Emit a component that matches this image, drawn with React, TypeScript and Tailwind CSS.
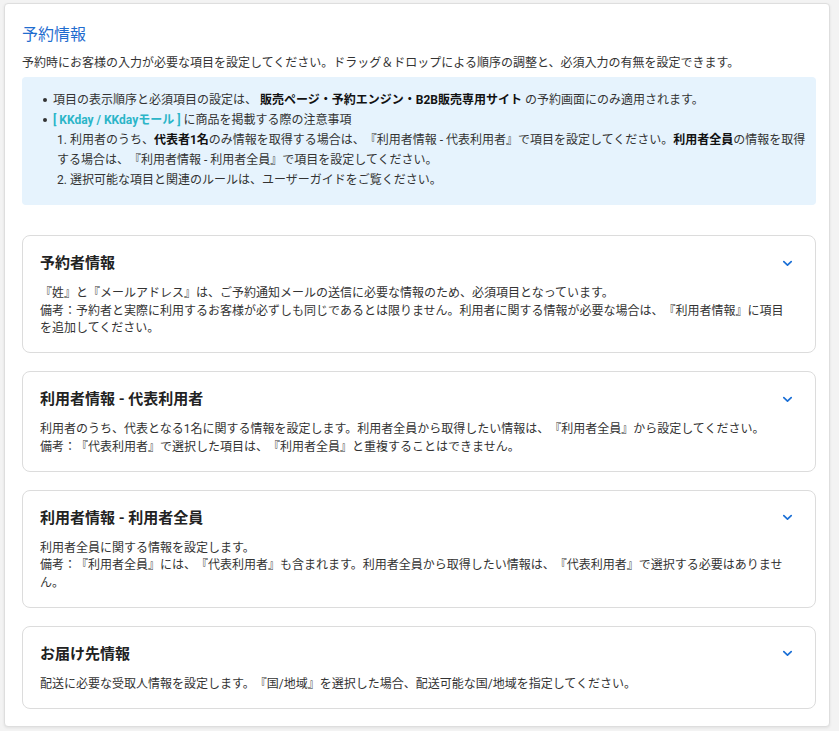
import React from "react";

const FONT = 'Roboto, "Noto Sans CJK JP", "Noto Sans", sans-serif';

function Chevron() {
  return (
    <svg width="11" height="7" viewBox="0 0 11 7" fill="none" className="shrink-0">
      <path d="M1.8 1.6 L5.5 5.1 L9.2 1.6" stroke="#1a6fd6" strokeWidth="1.7" strokeLinecap="round" strokeLinejoin="round" />
    </svg>
  );
}

function Section({ title, lines }: { title: string; lines: string[] }) {
  return (
    <div className="border border-[#dcdcdc] rounded-[8px] bg-white pl-[17px] pr-[22px] pt-[16px] pb-[14.5px]">
      <div className="flex items-center justify-between h-[22px]">
        <div className="text-[15px] font-bold text-[#222] leading-[22px]">{title}</div>
        <Chevron />
      </div>
      <div className="mt-[11px] text-[12px] leading-[17.5px] text-[#333]">
        {lines.map((l, i) => (
          <div key={i}>{l}</div>
        ))}
      </div>
    </div>
  );
}

export default function App() {
  return (
    <div
      className="min-h-screen bg-[#f3f3f3] pt-[3px] pl-[4px] [text-spacing-trim:space-all]"
      style={{ fontFamily: FONT }}
    >
      <div className="w-[826px] bg-white border border-[#dedede] rounded-[4px] shadow-[0_1px_3px_rgba(0,0,0,0.08)] pl-[17px] pr-[13px] pt-[19px] pb-[17px]">
        <div className="text-[16px] leading-[24px] text-[#1f6dcf]">予約情報</div>
        <div className="mt-[7px] text-[12px] leading-[18px] text-[#333]">
          予約時にお客様の入力が必要な項目を設定してください。ドラッグ＆ドロップによる順序の調整と、必須入力の有無を設定できます。
        </div>
        <div className="mt-[5px] bg-[#e6f3fd] rounded-[4px] pl-[18px] pr-[4px] pt-[13px] pb-[15px] text-[12px] leading-[20px] text-[#333]">
          <div className="flex">
            <div className="w-[13px] shrink-0 flex items-start pt-[8px]">
              <div className="w-[4px] h-[4px] rounded-full bg-[#333] ml-[3px]" />
            </div>
            <div>
              項目の表示順序と必須項目の設定は、 <b className="text-[#111]">販売ページ・予約エンジン・B2B販売専用サイト</b> の予約画面にのみ適用されます。
            </div>
          </div>
          <div className="flex">
            <div className="w-[13px] shrink-0 flex items-start pt-[8px]">
              <div className="w-[4px] h-[4px] rounded-full bg-[#333] ml-[3px]" />
            </div>
            <div className="flex-1">
              <div>
                <b className="text-[#2bb5c8]">[ KKday / KKdayモール ]</b> に商品を掲載する際の注意事項
              </div>
              <div className="pl-[4px]">
                <div>
                  1. 利用者のうち、<b className="text-[#111]">代表者1名</b>のみ情報を取得する場合は、『利用者情報 - 代表利用者』で項目を設定してください。<b className="text-[#111]">利用者全員</b>の情報を取得する場合は、『利用者情報 - 利用者全員』で項目を設定してください。
                </div>
                <div>2. 選択可能な項目と関連のルールは、ユーザーガイドをご覧ください。</div>
              </div>
            </div>
          </div>
        </div>
        <div className="mt-[30px] flex flex-col gap-[18px]">
          <Section
            title="予約者情報"
            lines={[
              "『姓』と『メールアドレス』は、ご予約通知メールの送信に必要な情報のため、必須項目となっています。",
              "備考：予約者と実際に利用するお客様が必ずしも同じであるとは限りません。利用者に関する情報が必要な場合は、『利用者情報』に項目を追加してください。",
            ]}
          />
          <Section
            title="利用者情報 - 代表利用者"
            lines={[
              "利用者のうち、代表となる1名に関する情報を設定します。利用者全員から取得したい情報は、『利用者全員』から設定してください。",
              "備考：『代表利用者』で選択した項目は、『利用者全員』と重複することはできません。",
            ]}
          />
          <Section
            title="利用者情報 - 利用者全員"
            lines={[
              "利用者全員に関する情報を設定します。",
              "備考：『利用者全員』には、『代表利用者』も含まれます。利用者全員から取得したい情報は、『代表利用者』で選択する必要はありません。",
            ]}
          />
          <Section
            title="お届け先情報"
            lines={["配送に必要な受取人情報を設定します。『国/地域』を選択した場合、配送可能な国/地域を指定してください。"]}
          />
        </div>
      </div>
    </div>
  );
}
